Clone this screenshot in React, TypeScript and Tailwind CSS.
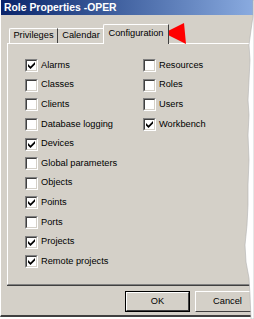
import React from "react";

const Check = ({ checked }: { checked: boolean }) => (
  <div className="w-[13px] h-[13px] shrink-0 border-t border-l border-t-[#808080] border-l-[#808080] border-b border-r border-b-white border-r-white">
    <div className="w-full h-full border-t border-l border-t-[#404040] border-l-[#404040] border-b border-r border-b-[#d4d0c8] border-r-[#d4d0c8] bg-white flex items-center justify-center">
      {checked && (
        <svg width="9" height="9" viewBox="0 0 9 9">
          <path d="M1 3 L3.5 5.5 L8 1 L8 3.5 L3.5 8 L1 5.5 Z" fill="#000" />
        </svg>
      )}
    </div>
  </div>
);

const Item = ({ label, checked }: { label: string; checked: boolean }) => (
  <div className="h-[19.6px] flex items-center gap-[3px]">
    <Check checked={checked} />
    <span>{label}</span>
  </div>
);

export default function App() {
  const left: [string, boolean][] = [
    ["Alarms", true],
    ["Classes", false],
    ["Clients", false],
    ["Database logging", false],
    ["Devices", true],
    ["Global parameters", false],
    ["Objects", false],
    ["Points", true],
    ["Ports", false],
    ["Projects", true],
    ["Remote projects", true],
  ];
  const right: [string, boolean][] = [
    ["Resources", false],
    ["Roles", false],
    ["Users", false],
    ["Workbench", true],
  ];
  return (
    <div
      className="relative w-[254px] h-[319px] overflow-hidden bg-white text-black text-[9.25px]"
      style={{ fontFamily: '"Liberation Sans", Arial, sans-serif' }}
    >
      <div className="w-[262px] h-[317px] flex flex-col bg-[#d4d0c8] border-l border-l-white border-b-2 border-b-[#404040]">
        <div className="h-[15px] flex items-center pl-[3px] bg-gradient-to-r from-[#0a246a] to-[#8fb0e4] text-white font-bold text-[10.4px]">
          Role Properties -OPER
        </div>
        <div className="flex flex-col pl-[6px] pt-[8px]">
          <div className="flex items-end h-[20px] pl-[2px] relative z-10">
            <div className="h-[15px] w-[49px] flex items-center justify-center border-t border-l border-white border-r border-r-[#404040] rounded-tl-[2px]">
              Privileges
            </div>
            <div className="h-[15px] w-[46px] flex items-center justify-center border-t border-white">
              Calendar
            </div>
            <div className="h-[20px] w-[66px] -ml-[1px] flex items-center justify-center border-t border-l border-white border-r border-r-[#404040] bg-[#d4d0c8] -mb-[1px] pb-[2px] rounded-tl-[2px]">
              Configuration
            </div>
          </div>
          <div className="h-[242px] border-t border-l border-white border-b border-b-[#808080] shadow-[0_1px_0_#404040] pl-[17px] pt-[12px] flex">
            <div className="w-[118px] flex flex-col">
              {left.map(([l, c]) => (
                <Item key={l} label={l} checked={c} />
              ))}
            </div>
            <div className="flex flex-col">
              {right.map(([l, c]) => (
                <Item key={l} label={l} checked={c} />
              ))}
            </div>
          </div>
          <div className="flex pl-[118px] pt-[6px] gap-[5px]">
            <div className="w-[65px] h-[21px] border border-black">
              <div className="w-full h-full border-t border-l border-white border-b border-r border-b-[#404040] border-r-[#404040] flex items-center justify-center">
                OK
              </div>
            </div>
            <div className="w-[65px] h-[21px] border-t border-l border-white border-b border-r border-b-[#404040] border-r-[#404040] flex items-center justify-center">
              Cancel
            </div>
          </div>
        </div>
      </div>
      <svg className="absolute left-0 top-0" width="254" height="319" viewBox="0 0 254 319">
        <polygon points="164,33 184,23 186,44" fill="#ff0000" />
        <polygon
          points="254,0 253,0 253,16 251,30 249,45 250,60 249,80 248,100 249,115 248,135 249,160 248,185 248,205 247,225 245,245 246,262 249,278 250,295 251,319 254,319"
          fill="#ffffff"
          stroke="#b0b0b0"
          strokeWidth="0.6"
        />
      </svg>
    </div>
  );
}
